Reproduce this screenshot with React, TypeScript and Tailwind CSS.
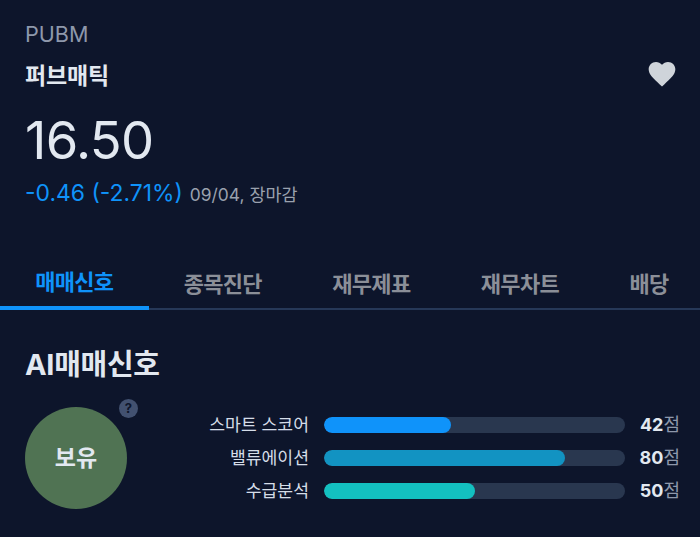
const font = { fontFamily: '"Inter", "Noto Sans CJK KR", sans-serif' };

const tabs = ['매매신호', '종목진단', '재무제표', '재무차트', '배당'];

const scores = [
  { label: '스마트 스코어', value: 42, width: 42.3, color: 'bg-[#0f93fa]' },
  { label: '밸류에이션', value: 80, width: 80, color: 'bg-[#1293c2]' },
  { label: '수급분석', value: 50, width: 50.3, color: 'bg-[#13c0c0]' },
];

export default function App() {
  return (
    <div style={font} className="w-[700px] h-[537px] overflow-hidden bg-[#0d152b] text-[#e2e8f0]">
      <header className="px-[25px] pt-[21px]">
        <div className="text-[21.6px] leading-[26px] text-[#8e98ab]">PUBM</div>
        <div className="mt-[14px] flex items-center justify-between">
          <h1 className="text-[23px] leading-[28px] font-bold tracking-[-0.2px]">퍼브매틱</h1>
          <svg viewBox="0 0 24 24" className="w-[32px] h-[32px] mr-[-3px] mt-[-3px] fill-[#cfd4da]">
            <path d="M12 21.4 10.5 20C5.4 15.4 2 12.3 2 8.5 2 5.4 4.4 3 7.5 3c1.7 0 3.4.8 4.5 2.1C13.1 3.8 14.8 3 16.5 3 19.6 3 22 5.4 22 8.5c0 3.8-3.4 6.9-8.5 11.5L12 21.4z" />
          </svg>
        </div>
        <div className="mt-[20px] text-[52.5px] leading-[60px] tracking-[-0.6px]">16.50</div>
        <div className="mt-[7px] flex items-baseline gap-[7px]">
          <span className="text-[22.9px] leading-[32px] text-[#0f93fa]">-0.46 (-2.71%)</span>
          <span className="text-[17.4px] text-[#9aa1ae]">09/04, 장마감</span>
        </div>
      </header>

      <nav className="mt-[49px] flex border-b-2 border-[#263858] whitespace-nowrap h-[52px]">
        {tabs.map((tab, i) => (
          <div
            key={tab}
            className={
              'px-[35.2px] shrink-0 h-[52px] flex items-center text-[22px] font-bold tracking-[-0.7px] ' +
              (i === 0 ? 'text-[#0f93fa] border-b-4 border-[#0f93fa]' : 'text-[#8b8f98]')
            }
          >
            {tab}
          </div>
        ))}
      </nav>

      <section className="pl-[25px] pr-[20px] pt-[36px]">
        <h2 className="text-[29px] leading-[38px] font-bold tracking-[-0.3px]">AI매매신호</h2>
        <div className="mt-[23px] flex items-center">
          <div className="relative shrink-0 w-[102px] h-[102px] rounded-full bg-[#507353] flex items-center justify-center text-[23px] font-bold">
            보유
            <span className="absolute right-[-11px] top-[-8px] w-[19px] h-[19px] rounded-full bg-[#425170] flex items-center justify-center text-[13px] leading-none font-bold text-[#0d152b]">
              ?
            </span>
          </div>
          <div className="flex-1 flex flex-col gap-[11px] pb-[1px]">
            {scores.map((s) => (
              <div key={s.label} className="flex items-center h-[22px]">
                <span className="w-[182px] text-right text-[17.2px] leading-[22px] text-[#d5dde8]">{s.label}</span>
                <div className="ml-[15px] w-[301px] h-[16px] rounded-full bg-[#29374f] overflow-hidden">
                  <div className={'h-full rounded-full ' + s.color} style={{ width: `${s.width}%` }} />
                </div>
                <span className="flex-1 text-right text-[18px] leading-[22px] text-[#8e98ab]">
                  <b className="text-[#e2e8f0]">{s.value}</b>점
                </span>
              </div>
            ))}
          </div>
        </div>
      </section>
    </div>
  );
}
